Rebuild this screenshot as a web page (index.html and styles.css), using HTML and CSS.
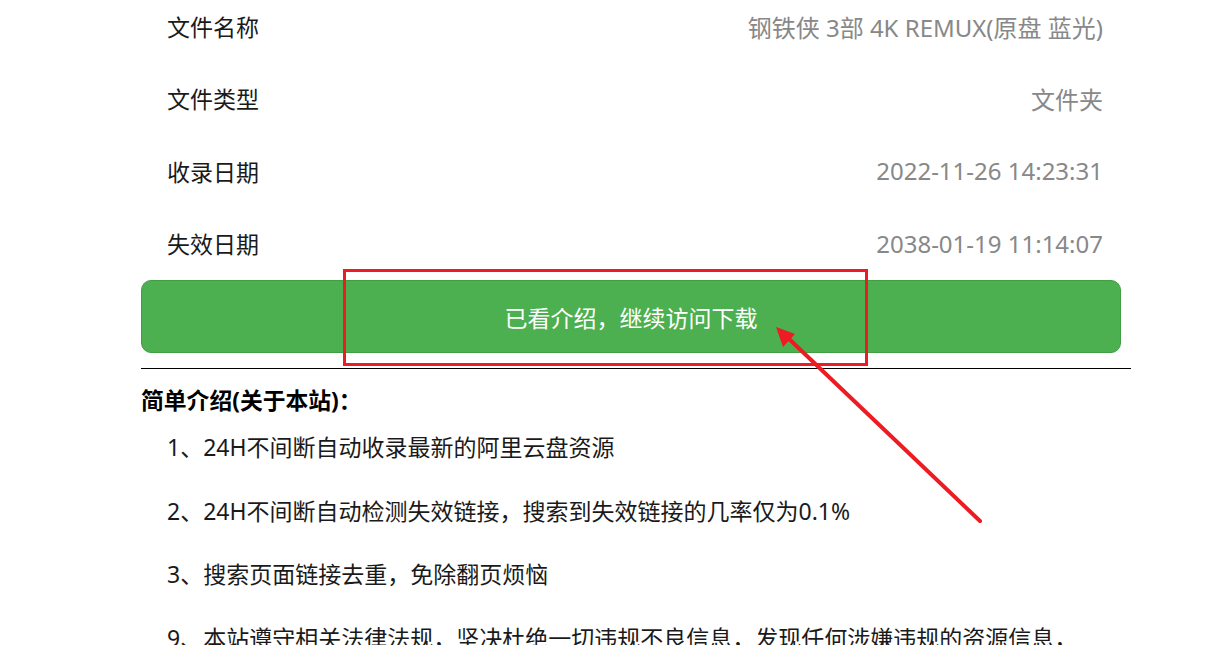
FILE: index.html
```html
<!DOCTYPE html>
<html lang="zh-CN">
<head>
<meta charset="utf-8">
<title>资源详情</title>
<link rel="stylesheet" href="styles.css">
</head>
<body>
<div class="page">
  <div class="info">
    <div class="row"><span class="label">文件名称</span><span class="value">钢铁侠 3部 4K REMUX(原盘 蓝光)</span></div>
    <div class="row"><span class="label">文件类型</span><span class="value">文件夹</span></div>
    <div class="row"><span class="label">收录日期</span><span class="value">2022-11-26 14:23:31</span></div>
    <div class="row"><span class="label">失效日期</span><span class="value">2038-01-19 11:14:07</span></div>
  </div>
  <a class="btn">已看介绍，继续访问下载</a>
  <hr class="divider">
  <h3 class="intro-title">简单介绍(关于本站)：</h3>
  <ul class="intro-list">
    <li>1、24H不间断自动收录最新的阿里云盘资源</li>
    <li>2、24H不间断自动检测失效链接，搜索到失效链接的几率仅为0.1%</li>
    <li>3、搜索页面链接去重，免除翻页烦恼</li>
    <li>9、本站遵守相关法律法规，坚决杜绝一切违规不良信息，发现任何涉嫌违规的资源信息，</li>
  </ul>
</div>
<svg class="annot" width="1214" height="645" viewBox="0 0 1214 645">
  <rect x="344.5" y="270.5" width="522" height="94" fill="none" stroke="#ED1C24" stroke-width="3"/>
  <line x1="980" y1="521" x2="786" y2="336" stroke="#ED1C24" stroke-width="4" stroke-linecap="round"/>
  <polygon points="776,327 795,334 783,347" fill="#ED1C24"/>
</svg>
</body>
</html>
```

FILE: styles.css
```css
html, body {
  margin: 0;
  padding: 0;
  background: #fff;
  overflow: hidden;
}
body {
  font-family: "Noto Sans", "Noto Sans CJK SC", sans-serif;
  color: #222;
  position: relative;
  width: 1214px;
  height: 645px;
}
.page {
  width: 990px;
  margin-left: 141px;
  margin-top: -10px;
}
.row {
  display: flex;
  justify-content: space-between;
  align-items: center;
  height: 72.3px;
  padding: 0 28px 0 26px;
  font-size: 23px;
}
.label {
  color: #1a1a1a;
}
.value {
  color: #888;
  font-size: 24px;
}
.btn {
  display: flex;
  align-items: center;
  justify-content: center;
  box-sizing: border-box;
  width: 980px;
  height: 73px;
  margin-top: 1px;
  background: #4CAF50;
  border: 1px solid #3fa043;
  border-radius: 10px;
  color: #fff;
  font-size: 23px;
}
.divider {
  border: 0;
  border-top: 1px solid #000;
  margin: 15px 0 0;
  height: 0;
}
.intro-title {
  margin: 17px 0 0;
  font-size: 22.8px;
  line-height: 30px;
  font-weight: 700;
  color: #000;
}
.intro-list {
  list-style: none;
  margin: 15px 0 0;
  padding: 0 0 0 26px;
}
.intro-list li {
  font-size: 23px;
  line-height: 32px;
  margin-bottom: 31.5px;
  color: #1a1a1a;
  white-space: nowrap;
}
.annot {
  position: absolute;
  left: 0;
  top: 0;
  pointer-events: none;
}
```
